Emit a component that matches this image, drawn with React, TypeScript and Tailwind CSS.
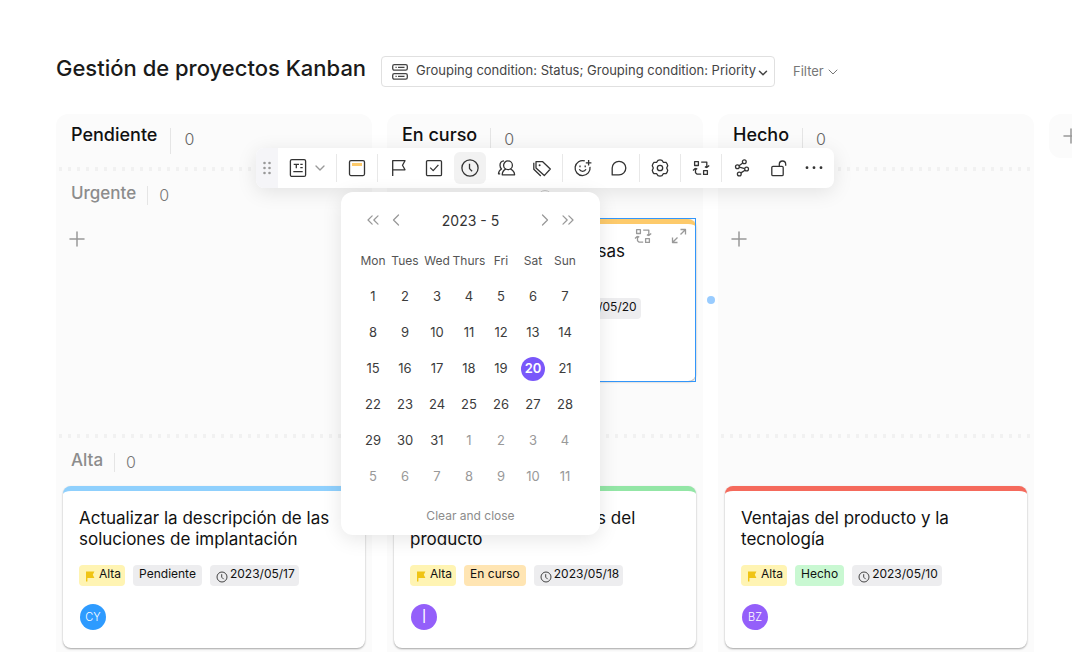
import type { ReactNode } from 'react'
import { ChevronDown, ChevronLeft, ChevronRight, ChevronsLeft, ChevronsRight, Plus } from 'lucide-react'
import clsx from 'clsx'

type Tag = {
    label: string
    kind: 'priority' | 'todo' | 'doing' | 'done' | 'date'
}

type CardData = {
    title: string
    accent: string
    tags: Tag[]
    avatar?: { initials: string; color: string }
    selected?: boolean
}

type Lane = {
    name?: string
    count?: number
    cards: CardData[]
}

type ColumnData = {
    name: string
    lanes: Lane[]
    toolbar?: boolean
}

const columns: ColumnData[] = [
    {
        name: 'Pendiente',
        lanes: [
            { name: 'Urgente', count: 0, cards: [] },
            {
                name: 'Alta',
                count: 0,
                cards: [
                    {
                        title: 'Actualizar la descripción de las soluciones de implantación',
                        accent: 'border-t-[#8fd0fd]',
                        tags: [
                            { label: 'Alta', kind: 'priority' },
                            { label: 'Pendiente', kind: 'todo' },
                            { label: '2023/05/17', kind: 'date' },
                        ],
                        avatar: { initials: 'CY', color: 'bg-[#2e9bff]' },
                    },
                ],
            },
        ],
    },
    {
        name: 'En curso',
        toolbar: true,
        lanes: [
            {
                cards: [
                    {
                        title: 'Propuestas para empresas internacionales',
                        accent: 'border-t-[#fdca6b]',
                        selected: true,
                        tags: [
                            { label: 'Crítica', kind: 'priority' },
                            { label: 'En curso', kind: 'doing' },
                            { label: '2023/05/20', kind: 'date' },
                        ],
                    },
                ],
            },
            {
                cards: [
                    {
                        title: 'Actualizar los materiales del producto',
                        accent: 'border-t-[#93e6a6]',
                        tags: [
                            { label: 'Alta', kind: 'priority' },
                            { label: 'En curso', kind: 'doing' },
                            { label: '2023/05/18', kind: 'date' },
                        ],
                        avatar: { initials: 'I', color: 'bg-[#945ffa]' },
                    },
                ],
            },
        ],
    },
    {
        name: 'Hecho',
        lanes: [
            { cards: [] },
            {
                cards: [
                    {
                        title: 'Ventajas del producto y la tecnología',
                        accent: 'border-t-[#f56a5c]',
                        tags: [
                            { label: 'Alta', kind: 'priority' },
                            { label: 'Hecho', kind: 'done' },
                            { label: '2023/05/10', kind: 'date' },
                        ],
                        avatar: { initials: 'BZ', color: 'bg-[#945ffa]' },
                    },
                ],
            },
        ],
    },
]

const tagColors = {
    priority: 'bg-[#fff4b3]',
    todo: 'bg-[#ededef]',
    doing: 'bg-[#ffe5b3]',
    done: 'bg-[#c9f8d2]',
    date: 'bg-[#ededef]',
}

const tagSpacing = {
    priority: 'gap-1 pr-1',
    todo: 'pr-1.5',
    doing: 'pr-1.5',
    done: 'pr-1.5',
    date: 'gap-0.5 pr-1',
}

const weekdays = ['Mon', 'Tues', 'Wed', 'Thurs', 'Fri', 'Sat', 'Sun']

// six weeks, the last days belong to the next month
const weeks = Array.from({ length: 6 }, (_, w) => Array.from({ length: 7 }, (_, d) => w * 7 + d + 1))

function Icon({ children, className = 'size-5' }: { children: ReactNode; className?: string }) {
    return (
        <svg
            viewBox="0 0 20 20"
            className={className}
            fill="none"
            stroke="currentColor"
            strokeWidth="1.3"
            strokeLinejoin="round"
            aria-hidden="true"
        >
            {children}
        </svg>
    )
}

const convertShapes = (
    <>
        <rect x="3.6" y="3.7" width="3.8" height="3.8" />
        <rect x="12.6" y="12.6" width="3.8" height="3.8" />
        <path d="M10.2 4.1h5.6v5.3M18.2 7.4l-2.5 2.2M13.9 8.6l1.8 1" />
        <path d="M10.2 16.2H6.2l-1.7-1.4v-4.4M2 12.6l2.5-2.3M6.3 11.2l-1.8-.9" />
    </>
)

function ToolButton({ label, active, children }: { label: string; active?: boolean; children: ReactNode }) {
    return (
        <button
            type="button"
            aria-label={label}
            className={clsx('flex size-8 items-center justify-center rounded-md text-[#333]', active && 'bg-[#f2f2f2]')}
        >
            <Icon>{children}</Icon>
        </button>
    )
}

function Separator() {
    return <div className="h-7 w-px bg-[#e8e8e8]" />
}

function Calendar() {
    return (
        <div className="absolute top-full -left-[113px] mt-2 w-[259px] rounded-xl bg-white pt-2 shadow-[0_4px_20px_rgba(0,0,0,0.10)]">
            <div className="flex h-10 items-center gap-[3px] px-[22px] text-[#999]">
                <button type="button" aria-label="Previous year"><ChevronsLeft className="size-5" strokeWidth={1.5} /></button>
                <button type="button" aria-label="Previous month"><ChevronLeft className="size-5" strokeWidth={1.5} /></button>
                <h2 className="flex-1 pt-0.5 text-center text-sm leading-6 text-[#333]">2023 - 5</h2>
                <button type="button" aria-label="Next month"><ChevronRight className="size-5" strokeWidth={1.5} /></button>
                <button type="button" aria-label="Next year"><ChevronsRight className="size-5" strokeWidth={1.5} /></button>
            </div>
            <table className="mt-[3px] ml-4 w-56 table-fixed text-center text-[13px] text-[#3c3c3c]">
                <thead>
                    <tr className="h-9">
                        {weekdays.map(day => (
                            <th key={day} className="p-0 font-normal text-[#555]">
                                <span className="flex justify-center text-xs">{day}</span>
                            </th>
                        ))}
                    </tr>
                </thead>
                <tbody>
                    {weeks.map((week, index) => (
                        <tr key={index} className="h-9">
                            {week.map(day => (
                                <td key={day} className="p-0">
                                    <button
                                        type="button"
                                        className={clsx(
                                            'size-6 rounded-full',
                                            day > 31 && 'text-[#999]',
                                            day === 20 && 'bg-[#7957fa] font-semibold text-white'
                                        )}
                                    >
                                        {day > 31 ? day - 31 : day}
                                    </button>
                                </td>
                            ))}
                        </tr>
                    ))}
                </tbody>
            </table>
            <div className="flex justify-center pt-[11px] pb-[9px]">
                <button type="button" className="text-xs leading-5 text-[#8c8c8c]">Clear and close</button>
            </div>
        </div>
    )
}

function Toolbar() {
    return (
        <div
            role="toolbar"
            className="absolute top-[34px] left-1/2 z-20 flex h-10 -translate-x-1/2 items-center gap-1 rounded-lg bg-white pr-1 shadow-[0_4px_20px_rgba(0,0,0,0.10)]"
        >
            <div className="flex h-10 w-[22px] items-center justify-center rounded-l-lg bg-[#f5f5f8] text-[#999]">
                <svg viewBox="0 0 8 14" className="h-3.5 w-2" fill="currentColor" aria-hidden="true">
                    {[2, 7, 12].map(y => (
                        <g key={y}>
                            <circle cx="1.5" cy={y} r="1.3" />
                            <circle cx="6.5" cy={y} r="1.3" />
                        </g>
                    ))}
                </svg>
            </div>
            <button type="button" aria-label="Card type" className="flex h-8 w-[50px] items-center gap-1 pl-1.5 text-[#333]">
                <Icon>
                    <rect x="2.4" y="1.6" width="15.2" height="16.8" rx="1.5" />
                    <path d="M5.7 6.3h5.3M8.3 6.3v4M12.3 6.3h2.4M12.3 9.7h2.4M5.3 13.7h9.4" />
                </Icon>
                <ChevronDown className="size-4 text-[#999]" strokeWidth={2} />
            </button>
            <Separator />
            <ToolButton label="Card color">
                <rect x="2.5" y="2.6" width="15" height="15" rx="1.5" />
                <path d="M5 5h10v3H5z" fill="#fdca6b" stroke="none" />
            </ToolButton>
            <Separator />
            <ToolButton label="Priority">
                <path d="M4.7 18V2.7H17l-2.5 4.6 2.5 4.5H4.7" />
            </ToolButton>
            <ToolButton label="Status">
                <rect x="2.5" y="2.6" width="15" height="15" rx="1.2" />
                <path d="M6.2 9.6l3 3 5.2-5.7" />
            </ToolButton>
            <div className="relative">
                <ToolButton label="Due date" active>
                    <circle cx="10" cy="10" r="8.1" />
                    <path d="M9.5 5.8v4.8l2.6 2.7" />
                </ToolButton>
                <Calendar />
            </div>
            <ToolButton label="Members">
                <circle cx="12" cy="7.3" r="4.4" />
                <path d="M9.8 11.2c-2 .9-3.4 2.7-3.6 5.6h12.4c-.2-2.9-1.9-4.7-4.2-5.6" />
                <path d="M8 2.8C5.4 3 4 5 4 7.3c0 1.5.6 2.8 1.5 3.7C3.7 12 2.6 13.7 2.5 15.8h1.7" />
            </ToolButton>
            <ToolButton label="Tags">
                <path d="M4 3.7h6.7l7.6 7.3-6 6.6L4 9.9z" />
                <path d="M1.8 4.8v6.4l7 6.8" />
                <circle cx="7.6" cy="7.3" r="1" fill="currentColor" stroke="none" />
            </ToolButton>
            <Separator />
            <ToolButton label="Reactions">
                <path d="M11.8 2.9a7.5 7.5 0 1 0 5.2 6" />
                <path d="M15.6 2v5.6M12.8 4.8h5.6M6.3 11.2c1.5 2.8 5.2 2.8 6.7 0M7 7.6v1.6M12.2 7.6v1.6" />
            </ToolButton>
            <ToolButton label="Comment">
                <path d="M3.2 16.9v-6.8a6.8 6.8 0 1 1 6.8 6.8z" />
            </ToolButton>
            <Separator />
            <ToolButton label="Settings">
                <path d="M8 2.3Q10 1.5 12 2.3L13.4 4.3L15.9 4.3Q17.3 5.6 17.7 7.7L16.7 10L17.7 12.3Q17.3 14.4 15.9 15.7L13.4 15.7L12 17.7Q10 18.5 8 17.7L6.6 15.7L4.1 15.7Q2.7 14.4 2.3 12.3L3.3 10L2.3 7.7Q2.7 5.6 4.1 4.3L6.6 4.3Z" />
                <circle cx="10" cy="10" r="2.7" />
            </ToolButton>
            <Separator />
            <ToolButton label="Convert">{convertShapes}</ToolButton>
            <Separator />
            <ToolButton label="Connections">
                <circle cx="12.3" cy="3.7" r="1.9" />
                <circle cx="5.4" cy="8.8" r="1.9" />
                <circle cx="14.6" cy="11" r="1.9" />
                <circle cx="7.3" cy="16" r="1.9" />
                <path d="M10.8 4.9L7 7.7M7.3 9.2l5.4 1.4M13.1 12.2l-4.2 2.7" />
            </ToolButton>
            <ToolButton label="Unlock">
                <rect x="3.8" y="8.4" width="11.4" height="9.2" rx="1.2" />
                <path d="M11.3 8.4V6.2a3.2 3.2 0 0 1 6.4 0v1.6" />
            </ToolButton>
            <ToolButton label="More">
                <g fill="currentColor" stroke="none">
                    <circle cx="3" cy="9.7" r="1.4" />
                    <circle cx="10" cy="9.7" r="1.4" />
                    <circle cx="17" cy="9.7" r="1.4" />
                </g>
            </ToolButton>
        </div>
    )
}

function CardTag({ tag }: { tag: Tag }) {
    return (
        <li
            className={clsx(
                'flex h-[21px] items-center rounded-sm pl-1.5 text-xs leading-4 whitespace-nowrap text-[#111]',
                tagSpacing[tag.kind],
                tagColors[tag.kind]
            )}
        >
            {tag.kind === 'priority' && (
                <svg viewBox="0 0 10 12" className="h-3 w-2.5 text-[#f0c414]" fill="currentColor" aria-hidden="true">
                    <path d="M1 1.5h8.4L7.8 4.700l1.600 3.200H2.400V11.500H1z" />
                </svg>
            )}
            {tag.kind === 'date' && (
                <svg viewBox="0 0 12 12" className="mt-0.5 size-3" fill="none" stroke="#444" aria-hidden="true">
                    <circle cx="6" cy="6" r="5" />
                    <path d="M5.7 3.2v3l2 2" />
                </svg>
            )}
            <span className="pb-1">{tag.label}</span>
        </li>
    )
}

function Card({ card }: { card: CardData }) {
    return (
        <article
            className={clsx(
                'relative min-h-[162px] rounded-lg border-t-[5px] bg-white px-4 pt-[17px] pb-[17px] shadow-[0_1px_2px_rgba(0,0,0,0.35)]',
                card.accent
            )}
        >
            {card.selected && (
                <>
                    <div className="pointer-events-none absolute inset-x-0 -top-1.5 -bottom-px border border-[#3296fa]">
                        <span className="absolute top-1/2 -right-5 size-2 -translate-y-1/2 rounded-full bg-[#99ccff]" />
                        <span className="absolute -top-[29px] left-1/2 size-3.5 -translate-x-1/2 rounded-full border border-[#ccc]" />
                    </div>
                    <div className="absolute top-0.5 right-[7px] flex gap-4 text-[#999]">
                        <button type="button" aria-label="Convert"><Icon>{convertShapes}</Icon></button>
                        <button type="button" aria-label="Expand">
                            <Icon>
                                <path d="M11.5 8.5L16.3 3.7M11.5 3.5h5v5M8.5 11.5L3.7 16.3M3.5 11.5v5h5" />
                            </Icon>
                        </button>
                    </div>
                </>
            )}
            <h3 className="text-[17px] leading-[21px] text-[#111]">{card.title}</h3>
            <ul className="mt-[15px] flex gap-2">
                {card.tags.map(tag => <CardTag key={tag.label} tag={tag} />)}
            </ul>
            {card.avatar && (
                <div className="mt-[18px] flex px-px">
                    <span
                        className={clsx(
                            'flex size-[26px] items-center justify-center rounded-full font-light text-white',
                            card.avatar.initials.length > 1 ? 'text-[11px]' : 'text-lg',
                            card.avatar.color
                        )}
                    >
                        {card.avatar.initials}
                    </span>
                </div>
            )}
        </article>
    )
}

function Column({ column }: { column: ColumnData }) {
    return (
        <section className="relative rounded-t-xl bg-[#fbfbfb] pb-10">
            <header className="flex h-[53px] items-start gap-[13px] px-[15px] pt-[9px]">
                <h2 className="text-lg leading-6 font-medium text-[#111]">{column.name}</h2>
                <div className="mt-[5px] h-[26px] w-px bg-[#e5e5e5]" />
                <span className="text-base leading-8 font-light text-[#666]">0</span>
            </header>
            {column.lanes.map((lane, index) => (
                <div key={index} className="min-h-[267px]">
                    <div className="h-1 bg-[radial-gradient(circle,#f1f1f1_2px,transparent_2px)] bg-[length:9px_4px] bg-repeat-x" />
                    <header className="flex h-12 items-start gap-[11px] px-[15px] pt-2.5">
                        {lane.name && (
                            <>
                                <h3 className="text-[17px] leading-6 font-medium text-[#8c8c8c]">{lane.name}</h3>
                                <div className="mt-[5px] h-[19px] w-px bg-[#e5e5e5]" />
                                <span className="text-base leading-7 font-light text-[#777]">{lane.count}</span>
                            </>
                        )}
                    </header>
                    <div className="px-[7px]">
                        {lane.cards.map(card => <Card key={card.title} card={card} />)}
                        {!lane.cards.length && (
                            <button type="button" aria-label="Add card" className="px-0.5 py-2 text-[#999]">
                                <Plus className="size-6" strokeWidth={1.5} />
                            </button>
                        )}
                    </div>
                </div>
            ))}
            {column.toolbar && <Toolbar />}
        </section>
    )
}

export default function App() {
    return (
        <main className="h-screen overflow-hidden bg-white pt-14 pl-14 font-['Inter',sans-serif]">
            <header className="flex h-[31px] items-center">
                <h1 className="pb-2 text-[22px] leading-7 font-medium whitespace-nowrap text-[#1a1a1a]">Gestión de proyectos Kanban</h1>
                <button
                    type="button"
                    className="ml-[15px] flex h-[31px] items-center rounded border border-[#e0e0e0] pr-1 pl-2 text-[13px] whitespace-nowrap text-[#444]"
                >
                    <Icon className="mr-1.5 size-5">
                        <rect x="2.7" y="2.6" width="14.6" height="5.6" rx="1.6" />
                        <rect x="2.7" y="11.6" width="14.6" height="5.6" rx="1.6" />
                        <path d="M5.5 5.4h1.2M8 5.4h6.5M5.5 14.4h1.2M8 14.4h6.5" />
                    </Icon>
                    <span className="pb-0.5">Grouping condition: Status; Grouping condition: Priority</span>
                    <ChevronDown className="mt-0.5 size-3.5" strokeWidth={2.5} />
                </button>
                <button type="button" className="ml-[18px] flex items-center gap-px text-[13px] text-[#777]">
                    Filter
                    <ChevronDown className="size-4" strokeWidth={1.5} />
                </button>
            </header>
            <div className="mt-[27px] grid grid-cols-[repeat(3,minmax(0,1fr))_23px] gap-[15px]">
                {columns.map(column => <Column key={column.name} column={column} />)}
                <button
                    type="button"
                    aria-label="Add column"
                    className="flex h-11 w-11 items-center justify-center rounded-xl bg-[#fbfbfb] text-[#999]"
                >
                    <Plus className="size-6" strokeWidth={1.5} />
                </button>
            </div>
        </main>
    )
}
